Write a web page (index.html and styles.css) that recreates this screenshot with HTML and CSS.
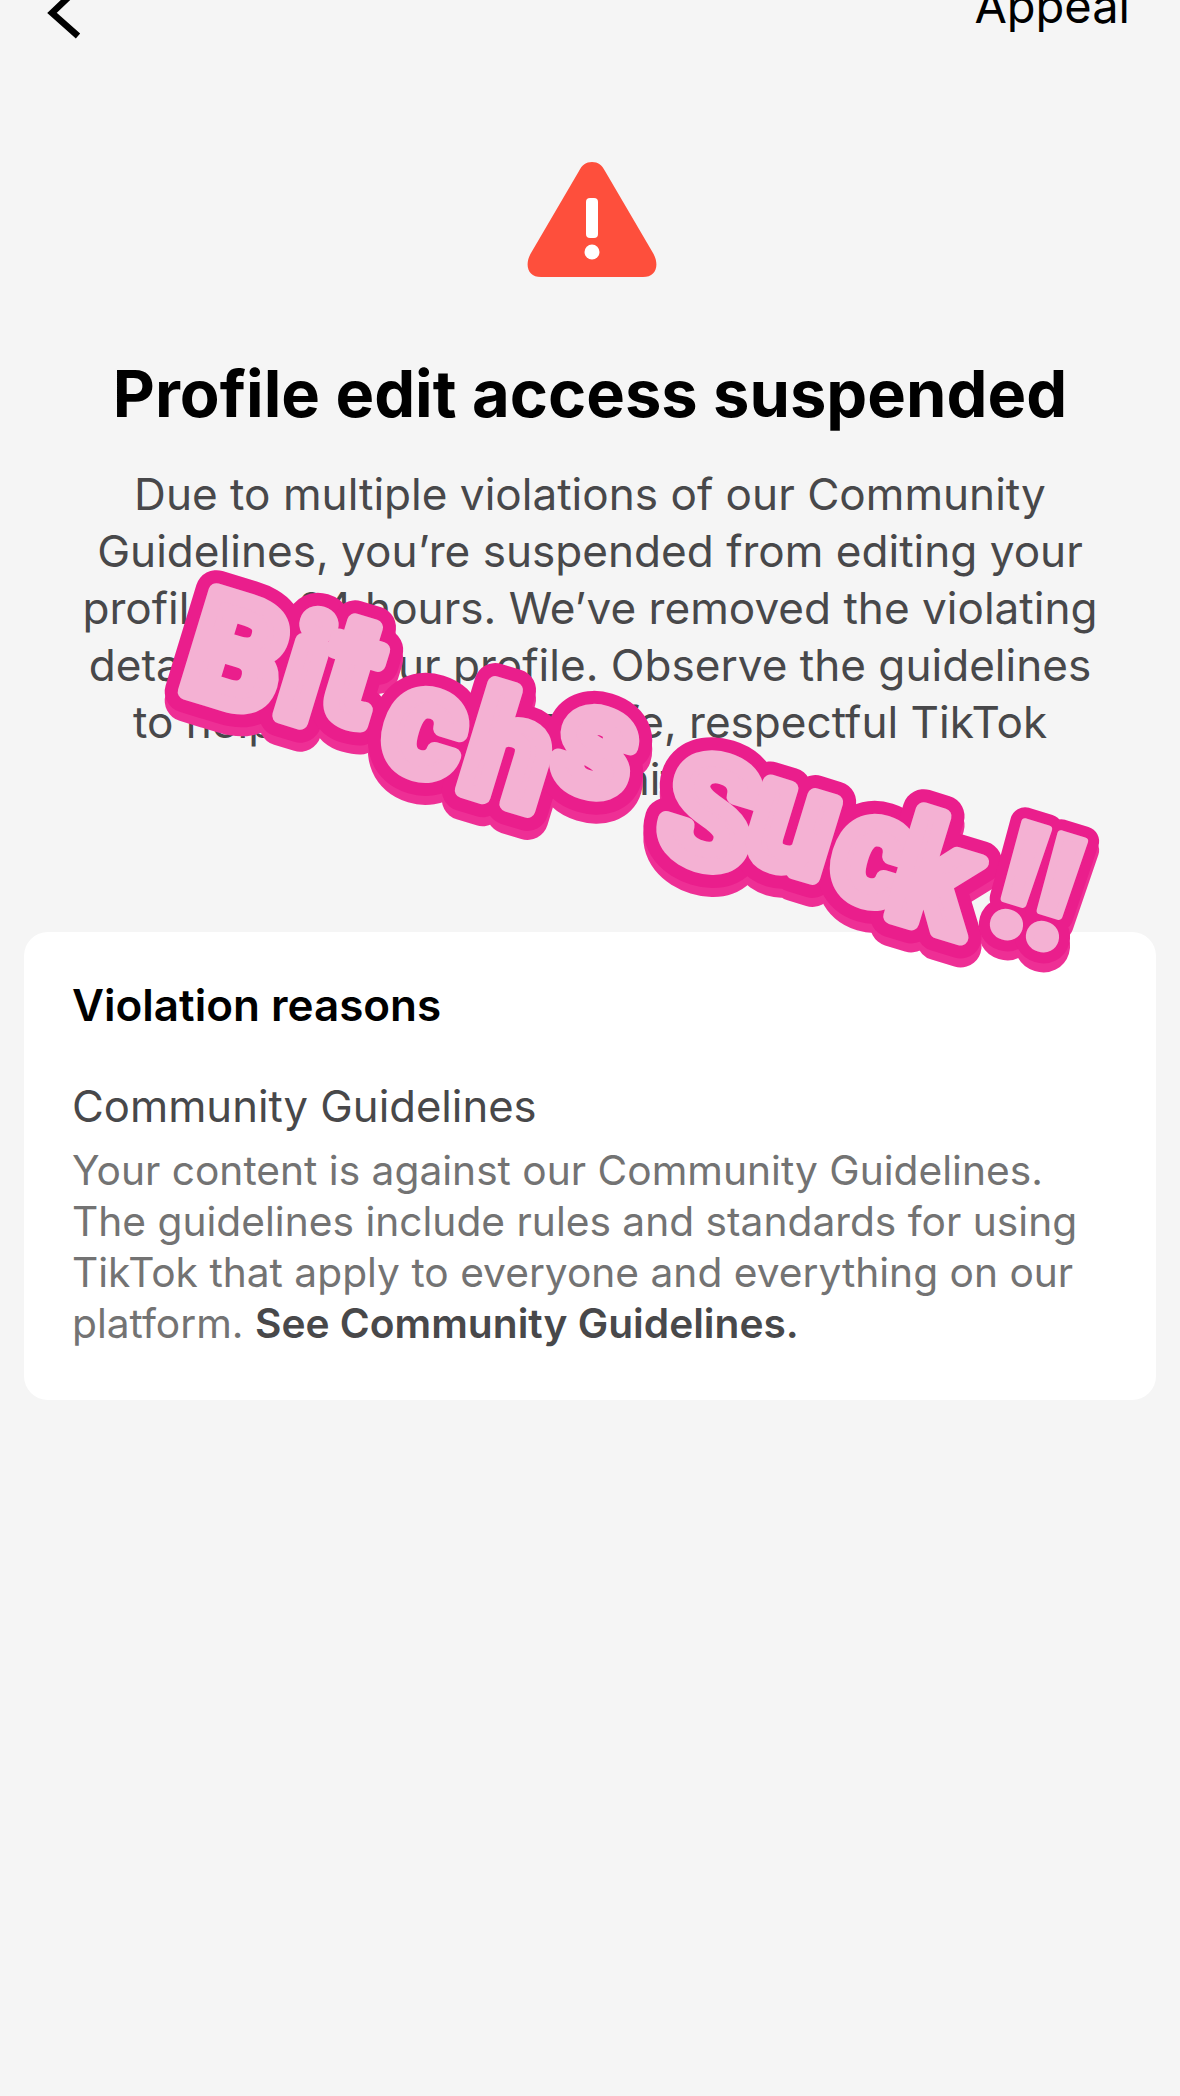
FILE: index.html
```html
<!DOCTYPE html>
<html lang="en">
<head>
<meta charset="utf-8">
<title>Profile edit access suspended</title>
<link rel="stylesheet" href="styles.css">
</head>
<body>
<div class="page">
  <header class="topbar">
    <svg class="back" width="40" height="60" viewBox="0 0 40 60"><path d="M32 8 L6 33 L32 56" /></svg>
    <span class="appeal">Appeal</span>
  </header>
  <main class="hero">
    <svg class="warn" width="130" height="116" viewBox="0 0 130 116">
      <path class="warn-tri" d="M65 0 C71 0 75 3 78 9 L126 91 C133 103 129 115 116 115 L14 115 C1 115 -3 103 4 91 L52 9 C55 3 59 0 65 0 Z"/>
      <rect class="warn-mark" x="59" y="36" width="12" height="40" rx="4"/>
      <circle class="warn-mark" cx="65" cy="90" r="7.5"/>
    </svg>
    <h1 class="title">Profile edit access suspended</h1>
    <p class="lead">Due to multiple violations of our Community<br>Guidelines, you’re suspended from editing your<br>profile for 24 hours. We’ve removed the violating<br>details from your profile. Observe the guidelines<br>to help us maintain a safe, respectful TikTok<br>community.</p>
  </main>
  <section class="card">
    <h2 class="card-title">Violation reasons</h2>
    <h3 class="card-sub">Community Guidelines</h3>
    <p class="card-text">Your content is against our Community Guidelines.<br>The guidelines include rules and standards for using<br>TikTok that apply to everyone and everything on our<br>platform. <a class="card-link">See Community Guidelines.</a></p>
  </section>
  <svg class="sticker" width="1180" height="2096" viewBox="0 0 1180 2096">
    <defs>
      <text id="sticker-text" class="sticker-glyphs" text-anchor="middle" rotate="17"
        x="224 291 340 414 497 585 640 697 782 863 923 1004 1040"
        y="689 713 711 760 788 779 820 849 855 888 914 928 940">Bitchs Suck<tspan class="bang">!!</tspan></text>
    </defs>
    <use href="#sticker-text" class="layer-shadow"/>
    <use href="#sticker-text" class="layer-outline"/>
    <use href="#sticker-text" class="layer-fill"/>
  </svg>
</div>
</body>
</html>
```
FILE: styles.css
```css
* { box-sizing: border-box; }
html, body { margin: 0; padding: 0; }
body { background: #f5f5f5; font-family: Inter, "Liberation Sans", sans-serif; }
.page { position: relative; width: 1180px; height: 2096px; overflow: hidden; background: #f5f5f5; }

.topbar { display: flex; justify-content: space-between; align-items: flex-start; height: 60px; margin-top: -20px; padding: 0 50px 0 46px; }
.back { overflow: visible; }
.back path { fill: none; stroke: #000; stroke-width: 6.5; }
.appeal { font-size: 47px; line-height: 60px; color: #000; margin-top: -4px; }

.hero { display: flex; flex-direction: column; align-items: center; padding-top: 122px; }
.warn { display: block; margin-left: 3px; }
.warn-tri { fill: #fe4f3c; }
.warn-mark { fill: #fff; }
.title { margin: 80px 0 0; font-size: 65px; line-height: 72px; font-weight: 700; color: #000; text-align: center; white-space: nowrap; }
.lead { margin: 36px 0 0; font-size: 44.1px; line-height: 57px; color: #48484a; text-align: center; white-space: nowrap; }

.card { margin: 124px 24px 0; padding: 48px; height: 468px; background: #fff; border-radius: 24px; }
.card-title { margin: 0; font-size: 44px; line-height: 50px; font-weight: 600; color: #000; }
.card-sub { margin: 52px 0 0; font-size: 43.6px; line-height: 50px; font-weight: 400; color: #48484a; }
.card-text { margin: 13px 0 0; font-size: 40.7px; line-height: 51px; color: #737373; white-space: nowrap; }
.card-link { font-weight: 600; color: #48484a; }

.sticker { position: absolute; left: 0; top: 0; pointer-events: none; }
.sticker-glyphs { font-family: Roboto, sans-serif; font-weight: 700; font-size: 148px; stroke-linejoin: round; stroke-linecap: round; }
.bang { font-weight: 700; font-size: 160px; stroke-width: var(--bang); }
.layer-shadow { --bang: 30px; fill: #ee2f95; stroke: #ee2f95; stroke-width: 42px; transform: translate(0, 9px); }
.layer-outline { --bang: 30px; fill: #ea1e8c; stroke: #ea1e8c; stroke-width: 42px; }
.layer-fill { --bang: 8px; fill: #f4b1d3; stroke: #f4b1d3; stroke-width: 16px; }
```
